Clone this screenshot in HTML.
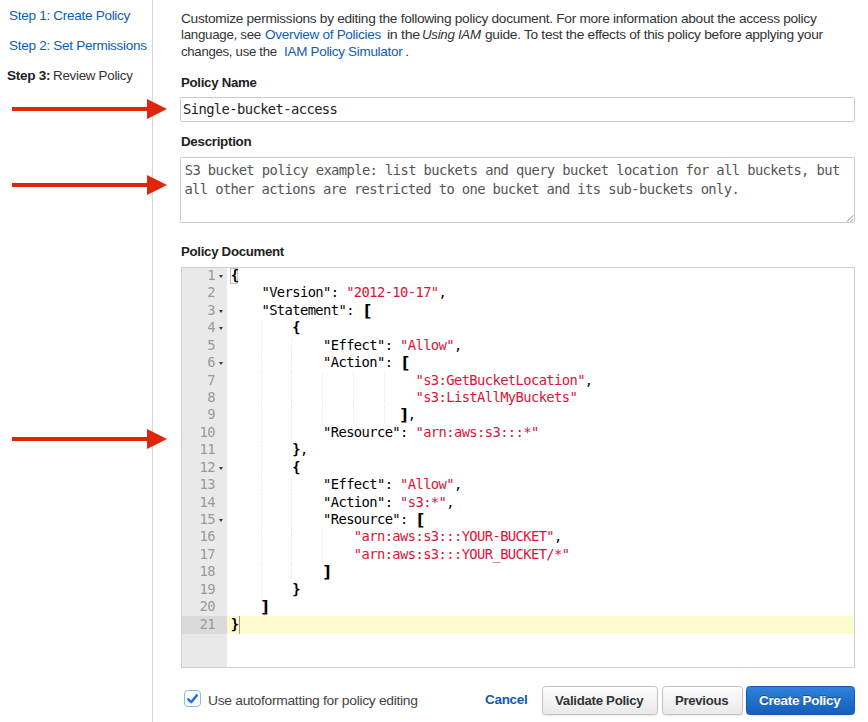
<!DOCTYPE html>
<html><head><meta charset="utf-8"><title>Review Policy</title>
<style>
html,body{margin:0;padding:0;background:#fff;}
body{width:868px;height:722px;position:relative;overflow:hidden;font-family:"Liberation Sans",sans-serif;color:#333;}
.t{position:absolute;white-space:pre;line-height:20px;transform-origin:0 0;}
.m{font-family:"DejaVu Sans Mono", "Liberation Mono", monospace;}
.vline{position:absolute;left:152px;top:0;width:1px;height:722px;background:#d8d8d8;}
.box{position:absolute;left:180px;width:675px;border:1px solid #cbcbcb;box-sizing:border-box;background:#fff;border-radius:1.5px;}
.editor{position:absolute;left:181px;top:267px;width:674px;height:401px;box-sizing:border-box;border:1px solid #cfcfcf;background:#fff;overflow:hidden;}
.editor>*{margin-left:-1px;margin-top:-1px;}
.gut{position:absolute;left:0;top:0;width:46px;height:402px;background:#e9e9e9;}
.agl{position:absolute;left:0;width:46px;background:#dadada;}
.al{position:absolute;left:46px;width:630px;background:#fffbd1;}
.ig{position:absolute;width:1px;background:repeating-linear-gradient(to bottom,#e6e6e6 0,#e6e6e6 1px,transparent 1px,transparent 2px);}
.bm{position:absolute;box-sizing:border-box;border:1px solid #c0c0c0;}
.ln{position:absolute;left:0;width:34px;text-align:right;color:#9a9a9a;font-family:"DejaVu Sans Mono", "Liberation Mono", monospace;font-size:13.8px;line-height:20px;white-space:pre;}
.cl{position:absolute;font-family:"DejaVu Sans Mono", "Liberation Mono", monospace;font-size:13.8px;line-height:20px;white-space:pre;color:#000;}
.cl b{font-weight:bold;}
.s{color:#dc1438;}
.bl,.br{display:inline-block;font-weight:bold;}
.bl{transform-origin:15% 25%;transform:scale(1.4,1.09);}
.br{transform-origin:85% 25%;transform:translateX(1.1px) scale(1.4,1.09);}
.fold{position:absolute;left:38.3px;width:0;height:0;border-left:2.6px solid transparent;border-right:2.6px solid transparent;border-top:3.2px solid #3a3a3a;}
.cur{position:absolute;width:1px;background:#a8937c;}
.btn{position:absolute;top:686px;height:28.5px;box-sizing:border-box;border:1px solid #c2c2c2;border-radius:3.5px;background:linear-gradient(#fdfdfd,#e9e9e9);box-shadow:0 1px 1px rgba(0,0,0,0.08);}
</style></head><body>
<div class="vline"></div>
<svg style="position:absolute;left:0;top:0" width="180" height="722">
<g fill="#e0250b">
<rect x="12" y="107" width="137" height="4"/><polygon points="147,99 167,109 147,119"/>
<rect x="12" y="183" width="137" height="4"/><polygon points="147,175 167,185 147,195"/>
<rect x="12" y="437" width="137" height="4"/><polygon points="147,429 167,439 147,449"/>
</g></svg>

<div class="box" style="top:97px;height:25px;"></div>
<div class="box" style="top:157px;height:66px;"></div>
<svg style="position:absolute;left:845px;top:213px" width="9" height="9"><path d="M2 8.6L8.2 2.4M5.7 8.6L8.2 6.1" stroke="#7a7a7a" stroke-width="0.9" fill="none"/></svg>

<div class="editor">
<div class="gut"></div>
<div class="agl" style="top:349.40px;height:17.43px"></div>
<div class="al" style="top:349.40px;height:17.43px"></div>
<div class="ig" style="left:79.55px;top:53.09px;height:17.43px"></div>
<div class="ig" style="left:79.55px;top:70.52px;height:17.43px"></div>
<div class="ig" style="left:110.35px;top:70.52px;height:17.43px"></div>
<div class="ig" style="left:79.55px;top:87.95px;height:17.43px"></div>
<div class="ig" style="left:110.35px;top:87.95px;height:17.43px"></div>
<div class="ig" style="left:79.55px;top:105.38px;height:17.43px"></div>
<div class="ig" style="left:110.35px;top:105.38px;height:17.43px"></div>
<div class="ig" style="left:141.15px;top:105.38px;height:17.43px"></div>
<div class="ig" style="left:171.95px;top:105.38px;height:17.43px"></div>
<div class="ig" style="left:202.75px;top:105.38px;height:17.43px"></div>
<div class="ig" style="left:79.55px;top:122.81px;height:17.43px"></div>
<div class="ig" style="left:110.35px;top:122.81px;height:17.43px"></div>
<div class="ig" style="left:141.15px;top:122.81px;height:17.43px"></div>
<div class="ig" style="left:171.95px;top:122.81px;height:17.43px"></div>
<div class="ig" style="left:202.75px;top:122.81px;height:17.43px"></div>
<div class="ig" style="left:79.55px;top:140.24px;height:17.43px"></div>
<div class="ig" style="left:110.35px;top:140.24px;height:17.43px"></div>
<div class="ig" style="left:141.15px;top:140.24px;height:17.43px"></div>
<div class="ig" style="left:171.95px;top:140.24px;height:17.43px"></div>
<div class="ig" style="left:202.75px;top:140.24px;height:17.43px"></div>
<div class="ig" style="left:79.55px;top:157.67px;height:17.43px"></div>
<div class="ig" style="left:110.35px;top:157.67px;height:17.43px"></div>
<div class="ig" style="left:79.55px;top:175.10px;height:17.43px"></div>
<div class="ig" style="left:79.55px;top:192.53px;height:17.43px"></div>
<div class="ig" style="left:79.55px;top:209.96px;height:17.43px"></div>
<div class="ig" style="left:110.35px;top:209.96px;height:17.43px"></div>
<div class="ig" style="left:79.55px;top:227.39px;height:17.43px"></div>
<div class="ig" style="left:110.35px;top:227.39px;height:17.43px"></div>
<div class="ig" style="left:79.55px;top:244.82px;height:17.43px"></div>
<div class="ig" style="left:110.35px;top:244.82px;height:17.43px"></div>
<div class="ig" style="left:79.55px;top:262.25px;height:17.43px"></div>
<div class="ig" style="left:110.35px;top:262.25px;height:17.43px"></div>
<div class="ig" style="left:141.15px;top:262.25px;height:17.43px"></div>
<div class="ig" style="left:79.55px;top:279.68px;height:17.43px"></div>
<div class="ig" style="left:110.35px;top:279.68px;height:17.43px"></div>
<div class="ig" style="left:141.15px;top:279.68px;height:17.43px"></div>
<div class="ig" style="left:79.55px;top:297.11px;height:17.43px"></div>
<div class="ig" style="left:110.35px;top:297.11px;height:17.43px"></div>
<div class="ig" style="left:79.55px;top:314.54px;height:17.43px"></div>
<div class="bm" style="left:49.15px;top:0.80px;width:7.70px;height:16.43px"></div>
<span class="ln" style="top:-2.00px;letter-spacing:-0.607px">1</span>
<i class="fold" style="top:8.00px"></i>
<span class="cl" style="left:49.65px;top:-2.00px;letter-spacing:-0.607px"><b>{</b></span>
<span class="ln" style="top:15.00px;letter-spacing:-0.607px">2</span>
<span class="cl" style="left:80.45px;top:15.00px;letter-spacing:-0.607px">"Version": <span class="s">"2012-10-17"</span>,</span>
<span class="ln" style="top:33.00px;letter-spacing:-0.607px">3</span>
<i class="fold" style="top:42.86px"></i>
<span class="cl" style="left:80.45px;top:33.00px;letter-spacing:-0.607px">"Statement": <b class="bl">[</b></span>
<span class="ln" style="top:50.00px;letter-spacing:-0.607px">4</span>
<i class="fold" style="top:60.29px"></i>
<span class="cl" style="left:111.25px;top:50.00px;letter-spacing:-0.607px"><b>{</b></span>
<span class="ln" style="top:68.00px;letter-spacing:-0.607px">5</span>
<span class="cl" style="left:142.05px;top:68.00px;letter-spacing:-0.607px">"Effect": <span class="s">"Allow"</span>,</span>
<span class="ln" style="top:85.00px;letter-spacing:-0.607px">6</span>
<i class="fold" style="top:95.15px"></i>
<span class="cl" style="left:142.05px;top:85.00px;letter-spacing:-0.607px">"Action": <b class="bl">[</b></span>
<span class="ln" style="top:103.00px;letter-spacing:-0.607px">7</span>
<span class="cl" style="left:234.45px;top:103.00px;letter-spacing:-0.607px"><span class="s">"s3:GetBucketLocation"</span>,</span>
<span class="ln" style="top:120.00px;letter-spacing:-0.607px">8</span>
<span class="cl" style="left:234.45px;top:120.00px;letter-spacing:-0.607px"><span class="s">"s3:ListAllMyBuckets"</span></span>
<span class="ln" style="top:137.00px;letter-spacing:-0.607px">9</span>
<span class="cl" style="left:219.05px;top:137.00px;letter-spacing:-0.607px"><b class="br">]</b>,</span>
<span class="ln" style="top:155.00px;letter-spacing:-0.607px">10</span>
<span class="cl" style="left:142.05px;top:155.00px;letter-spacing:-0.607px">"Resource": <span class="s">"arn:aws:s3:::*"</span></span>
<span class="ln" style="top:172.00px;letter-spacing:-0.607px">11</span>
<span class="cl" style="left:111.25px;top:172.00px;letter-spacing:-0.607px"><b>}</b>,</span>
<span class="ln" style="top:190.00px;letter-spacing:-0.607px">12</span>
<i class="fold" style="top:199.73px"></i>
<span class="cl" style="left:111.25px;top:190.00px;letter-spacing:-0.607px"><b>{</b></span>
<span class="ln" style="top:207.00px;letter-spacing:-0.607px">13</span>
<span class="cl" style="left:142.05px;top:207.00px;letter-spacing:-0.607px">"Effect": <span class="s">"Allow"</span>,</span>
<span class="ln" style="top:225.00px;letter-spacing:-0.607px">14</span>
<span class="cl" style="left:142.05px;top:225.00px;letter-spacing:-0.607px">"Action": <span class="s">"s3:*"</span>,</span>
<span class="ln" style="top:242.00px;letter-spacing:-0.607px">15</span>
<i class="fold" style="top:252.02px"></i>
<span class="cl" style="left:142.05px;top:242.00px;letter-spacing:-0.607px">"Resource": <b class="bl">[</b></span>
<span class="ln" style="top:259.00px;letter-spacing:-0.607px">16</span>
<span class="cl" style="left:172.85px;top:259.00px;letter-spacing:-0.607px"><span class="s">"arn:aws:s3:::YOUR-BUCKET"</span>,</span>
<span class="ln" style="top:277.00px;letter-spacing:-0.607px">17</span>
<span class="cl" style="left:172.85px;top:277.00px;letter-spacing:-0.607px"><span class="s">"arn:aws:s3:::YOUR_BUCKET/*"</span></span>
<span class="ln" style="top:294.00px;letter-spacing:-0.607px">18</span>
<span class="cl" style="left:142.05px;top:294.00px;letter-spacing:-0.607px"><b class="br">]</b></span>
<span class="ln" style="top:312.00px;letter-spacing:-0.607px">19</span>
<span class="cl" style="left:111.25px;top:312.00px;letter-spacing:-0.607px"><b>}</b></span>
<span class="ln" style="top:329.00px;letter-spacing:-0.607px">20</span>
<span class="cl" style="left:80.45px;top:329.00px;letter-spacing:-0.607px"><b class="br">]</b></span>
<span class="ln" style="top:347.00px;letter-spacing:-0.607px">21</span>
<span class="cl" style="left:49.65px;top:347.00px;letter-spacing:-0.607px"><b>}</b></span>
<div class="cur" style="left:57.95px;top:349.40px;height:17.43px"></div>
</div>

<div style="position:absolute;left:184px;top:690px;width:17px;height:17px;border:1.5px solid #86b6ec;border-radius:4px;background:#fff;box-sizing:border-box;"></div>
<svg width="17" height="16" viewBox="0 0 17 16" style="position:absolute;left:184px;top:690.5px"><path d="M4.3 8.3L7.2 11.2L12.8 4.4" stroke="#1f72d6" stroke-width="2.5" fill="none" stroke-linecap="round" stroke-linejoin="round"/></svg>
<div class="btn" style="left:542px;width:116px;"></div>
<div class="btn" style="left:662px;width:80.5px;"></div>
<div class="btn" style="left:746px;width:109px;background:linear-gradient(#2f82dc,#145fbb);border-color:#1358ad;"></div>

<span class="t" style="left:8.85px;top:6.00px;font-size:13.6px;letter-spacing:-0.3px;transform:scaleX(0.9971);color:#0d5db3">Step 1: Create Policy</span>
<span class="t" style="left:8.75px;top:36.00px;font-size:13.6px;letter-spacing:-0.3px;transform:scaleX(0.9967);color:#0d5db3">Step 2: Set Permissions</span>
<span class="t" style="left:7.20px;top:66.00px;font-size:13.6px;letter-spacing:-0.3px;transform:scaleX(0.9988);color:#222;font-weight:bold">Step 3:</span>
<span class="t" style="left:52.81px;top:66.00px;font-size:13.6px;letter-spacing:-0.3px;transform:scaleX(0.9862);color:#333">Review Policy</span>
<span class="t" style="left:180.74px;top:9.00px;font-size:13.6px;letter-spacing:-0.3px;transform:scaleX(1.0083);color:#333333">Customize permissions by editing the following policy document. For more information about the access policy</span>
<span class="t" style="left:180.52px;top:25.00px;font-size:13.6px;letter-spacing:-0.3px;transform:scaleX(0.9807);color:#333333">language, see</span>
<span class="t" style="left:265.25px;top:25.00px;font-size:13.6px;letter-spacing:-0.3px;transform:scaleX(0.9957);color:#0d5db3">Overview of Policies</span>
<span class="t" style="left:386.56px;top:25.00px;font-size:13.6px;letter-spacing:-0.3px;transform:scaleX(1.0446);color:#333333">in the</span>
<span class="t" style="left:421.62px;top:25.00px;font-size:13.6px;letter-spacing:-0.3px;transform:scaleX(0.9789);color:#333333;font-style:italic">Using IAM</span>
<span class="t" style="left:485.29px;top:25.00px;font-size:13.6px;letter-spacing:-0.3px;transform:scaleX(1.0120);color:#333333">guide. To test the effects of this policy before applying your</span>
<span class="t" style="left:181.01px;top:42.00px;font-size:13.6px;letter-spacing:-0.3px;transform:scaleX(0.9704);color:#333333">changes, use the</span>
<span class="t" style="left:284.16px;top:42.00px;font-size:13.6px;letter-spacing:-0.3px;transform:scaleX(0.9911);color:#0d5db3">IAM Policy Simulator</span>
<span class="t" style="left:405.25px;top:42.00px;font-size:13.6px;letter-spacing:-0.3px;transform:scaleX(1.0000);color:#333333">.</span>
<span class="t" style="left:180.91px;top:73.00px;font-size:13.4px;letter-spacing:-0.3px;transform:scaleX(0.9900);color:#222;font-weight:bold">Policy Name</span>
<span class="t" style="left:180.90px;top:132.00px;font-size:13.4px;letter-spacing:-0.3px;transform:scaleX(0.9993);color:#222;font-weight:bold">Description</span>
<span class="t" style="left:180.91px;top:242.00px;font-size:13.4px;letter-spacing:-0.3px;transform:scaleX(0.9889);color:#222;font-weight:bold">Policy Document</span>
<span class="t" style="left:207.68px;top:691.00px;font-size:13.6px;letter-spacing:-0.3px;transform:scaleX(1.0188);color:#444">Use autoformatting for policy editing</span>
<span class="t" style="left:484.70px;top:690.00px;font-size:13.4px;letter-spacing:-0.3px;transform:scaleX(1.0073);color:#0d5db3;font-weight:bold">Cancel</span>
<span class="t" style="left:555.45px;top:691.00px;font-size:13.4px;letter-spacing:-0.3px;transform:scaleX(0.9894);color:#333;font-weight:bold">Validate Policy</span>
<span class="t" style="left:674.92px;top:691.00px;font-size:13.4px;letter-spacing:-0.3px;transform:scaleX(0.9811);color:#333;font-weight:bold">Previous</span>
<span class="t" style="left:759.30px;top:691.00px;font-size:13.4px;letter-spacing:-0.3px;transform:scaleX(1.0056);color:#fff;font-weight:bold;text-shadow:0 -1px 0 rgba(0,0,0,0.35)">Create Policy</span>
<span class="t m" style="left:183.00px;top:99.00px;font-size:13.8px;letter-spacing:-0.592px;color:#222">Single-bucket-access</span>
<span class="t m" style="left:184.70px;top:160.00px;font-size:13.8px;letter-spacing:-0.601px;color:#555">S3 bucket policy example: list buckets and query bucket location for all buckets, but</span>
<span class="t m" style="left:184.40px;top:179.00px;font-size:13.8px;letter-spacing:-0.601px;color:#555">all other actions are restricted to one bucket and its sub-buckets only.</span>
</body></html>
